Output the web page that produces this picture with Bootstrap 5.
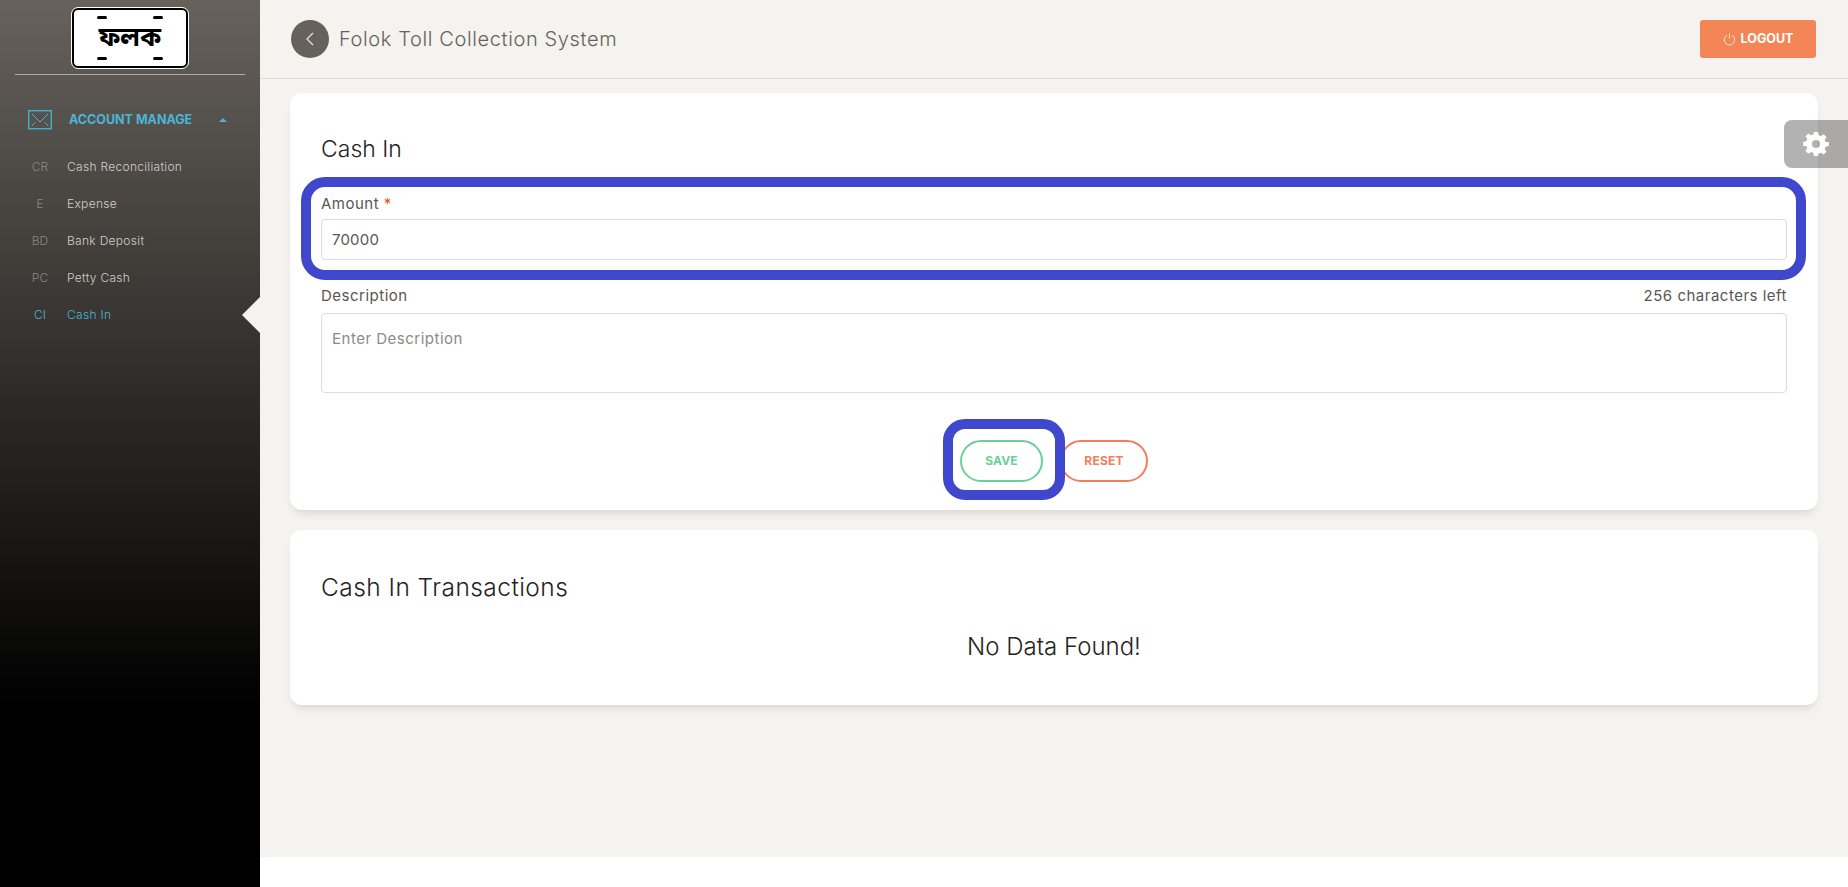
<!DOCTYPE html>
<html lang="en"><head><meta charset="utf-8"><title>Cash In</title>
<link href="https://cdn.jsdelivr.net/npm/bootstrap@5.3.0/dist/css/bootstrap.min.css" rel="stylesheet">
<style>
html,body{height:887px;overflow:hidden;background:#fff}
body{font-family:Inter,"Noto Sans",sans-serif;color:#403d39;font-size:14px}
.shell{height:887px}
.side{width:260px;flex:none;height:887px;background:linear-gradient(180deg,#66615b 0,#000 80%);position:relative;color:#d0cecb}
.logo-wrap{height:75px;margin:0 15px;border-bottom:1px solid rgba(255,255,255,.5)}
.plate{width:116px;height:60px;margin-top:8px;background:#fff;border:2px solid #000;outline:1px solid #fff;border-radius:6px;position:relative;font:700 26px/60px "Noto Sans Bengali","Lohit Bengali","FreeSans",sans-serif;color:#000;text-align:center}
.plate i{position:absolute;width:10px;height:3px;background:#000;border-radius:2px}
.menu-head{margin-top:30px;padding-left:28px;height:30px;color:#4bb5d6;font-weight:700;font-size:12.5px}
.menu-head .lbl{margin-left:17px;width:146px;white-space:nowrap}
.caret-up{width:0;height:0;border:4px solid transparent;border-bottom:4px solid #4bb5d6;border-top:0;margin-left:4px}
.sub-item{height:37px;font-size:12px;margin-top:0;font-weight:300;letter-spacing:.3px}
.sub-item .abbr{width:40px;margin-left:20px;text-align:center;color:#8a8782;letter-spacing:0}
.sub-item .nm{margin-left:7px}
.sub-item.on,.sub-item.on .abbr{color:#4bb5d6}
.subs{margin-top:13px}
.pointer{position:absolute;left:242px;top:297px;width:0;height:0;border:18px solid transparent;border-left:0;border-right:18px solid #f4f3ef}
.panel{height:857px;background:#f4f3ef;flex:1 1 auto;min-width:0}
.topbar{height:79px;border-bottom:1px solid #ddd;padding:0 32px 0 31px}
.back-btn{width:38px;height:38px;background:#66615b;border-radius:50%}
.page-ttl{font-size:20px;color:#66615b;margin-left:10px;font-weight:300;letter-spacing:.62px}
.logout{width:116px;height:38px;background:#f38556;color:#fff;font-weight:700;font-size:12.5px;border:0;border-radius:3px;gap:5px;padding:0}
.sheet{background:#fff;border:0;border-radius:12px;box-shadow:0 6px 10px -4px rgba(0,0,0,.15);margin:14px 30px 0 30px;padding:0 31px}
.s1{height:417px;padding-top:43px}
.s2{height:175px;margin-top:20px;padding-top:44px}
.sheet-ttl{font-size:23px;color:#252422;line-height:26px;font-weight:300;margin:0}
.s2 .sheet-ttl{font-size:24.5px;letter-spacing:.45px}
.fld-lbl{font-size:15px;line-height:18px;color:#5a5651;letter-spacing:.5px}
.amount-row{margin-top:33px}
.amount-lbl{margin-bottom:6px}
.req{color:#ef4b23}
.fld{height:41px;border:1px solid #ddd;border-radius:4px;font-size:15px;color:#5a5651;padding:0 10px;box-shadow:none;letter-spacing:.2px}
.desc-head{margin-top:27px;margin-bottom:8px}
.txt{height:80px;border:1px solid #ddd;border-radius:4px;font-size:15px;padding:14px 10px;resize:none;box-shadow:none;letter-spacing:.5px}
.txt::placeholder{color:#8a8a8a}
.btn-row{margin-top:47px}
.pill{height:42px;border-radius:21px;background:#fff;font-weight:700;font-size:12px;padding:0;border:2px solid;letter-spacing:.2px}
.pill-g{width:83px;border-color:#6bd098;color:#6bd098}
.pill-o{width:88px;border-color:#f17e5d;color:#f17e5d;margin-left:17px}
.nodata{font-size:24px;font-weight:300;color:#252422;text-align:center;margin-top:33px;line-height:28px}
.mark-box{position:absolute;border:10px solid #3f48cc;pointer-events:none}
.gear-tab{position:absolute;right:0;top:120px;width:64px;height:48px;background:rgba(0,0,0,.3);border-radius:8px 0 0 8px}
</style></head>
<body>
<div class="shell d-flex">
 <aside class="side">
  <div class="logo-wrap d-flex justify-content-center">
   <div class="plate">ফলক<i style="left:23px;top:6px"></i><i style="left:79px;top:6px"></i><i style="left:23px;top:47px"></i><i style="left:79px;top:47px"></i></div>
  </div>
  <div class="menu-head d-flex align-items-center">
   <svg width="24" height="20" viewBox="0 0 24 20" fill="none" stroke="#4bb5d6"><rect x=".75" y=".75" width="22.5" height="18" stroke-width="1.3"/><path d="M4 4l8 8 8-8M3.5 16l4-3.5M20.5 16l-4-3.5" stroke-width="1"/></svg>
   <span class="lbl">ACCOUNT MANAGE</span><span class="caret-up"></span>
  </div>
  <div class="subs">
   <div class="sub-item d-flex align-items-center"><span class="abbr">CR</span><span class="nm">Cash Reconciliation</span></div>
   <div class="sub-item d-flex align-items-center"><span class="abbr">E</span><span class="nm">Expense</span></div>
   <div class="sub-item d-flex align-items-center"><span class="abbr">BD</span><span class="nm">Bank Deposit</span></div>
   <div class="sub-item d-flex align-items-center"><span class="abbr">PC</span><span class="nm">Petty Cash</span></div>
   <div class="sub-item on d-flex align-items-center"><span class="abbr">CI</span><span class="nm">Cash In</span></div>
  </div>
  <span class="pointer"></span>
 </aside>
 <main class="panel">
  <header class="topbar d-flex align-items-center justify-content-between">
   <div class="d-flex align-items-center">
    <span class="back-btn d-flex align-items-center justify-content-center"><svg width="10" height="16" viewBox="0 0 10 16" fill="none" stroke="#e8e6e3" stroke-width="1.2"><path d="M8 2L2 8l6 6"/></svg></span>
    <span class="page-ttl">Folok Toll Collection System</span>
   </div>
   <button class="btn logout d-flex align-items-center justify-content-center" type="button"><svg width="13" height="13" viewBox="0 0 13 13" fill="none" stroke="#fbe3d8" stroke-width="1"><path d="M4 2.2a5.2 5.2 0 1 0 5 0M6.5 .5v5"/></svg>LOGOUT</button>
  </header>
  <section class="sheet s1">
   <h5 class="sheet-ttl">Cash In</h5>
   <div class="amount-row">
    <label class="fld-lbl amount-lbl d-block">Amount <span class="req">*</span></label>
    <input class="form-control fld" value="70000">
   </div>
   <div class="d-flex justify-content-between fld-lbl desc-head"><span>Description</span><span>256 characters left</span></div>
   <textarea class="form-control txt" placeholder="Enter Description"></textarea>
   <div class="d-flex justify-content-center btn-row">
    <button class="btn pill pill-g" type="button">SAVE</button>
    <button class="btn pill pill-o" type="button">RESET</button>
   </div>
  </section>
  <section class="sheet s2">
   <h5 class="sheet-ttl">Cash In Transactions</h5>
   <div class="nodata">No Data Found!</div>
  </section>
 </main>
</div>
<div class="mark-box" style="left:301px;top:177px;width:1505px;height:103px;border-radius:24px"></div>
<div class="mark-box" style="left:943px;top:419px;width:122px;height:81px;border-radius:22px"></div>
<div class="gear-tab d-flex align-items-center justify-content-center"><svg width="26" height="26" viewBox="0 0 26 26"><path fill="#fff" fill-rule="evenodd" d="M11 1h4l.7 3.2 2.2.9 2.8-1.8 2.8 2.8-1.8 2.8.9 2.2L25.8 11v4l-3.2.7-.9 2.2 1.8 2.8-2.8 2.8-2.8-1.8-2.2.9L15 25h-4l-.7-3.2-2.2-.9-2.8 1.8-2.8-2.8 1.8-2.8-.9-2.2L.2 15v-4l3.2-.7.9-2.2-1.8-2.8 2.8-2.8 2.8 1.8 2.2-.9zM13 9a4 4 0 1 0 0 8 4 4 0 0 0 0-8z"/></svg></div>
<script src="https://cdn.jsdelivr.net/npm/bootstrap@5.3.0/dist/js/bootstrap.bundle.min.js"></script>
</body></html>
